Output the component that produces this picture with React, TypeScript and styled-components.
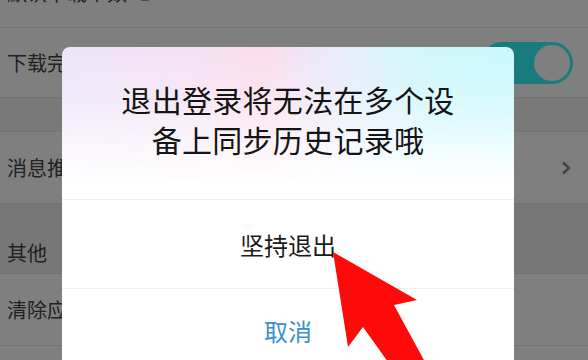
import React from "react";
import styled, { createGlobalStyle } from "styled-components";

const GlobalStyle = createGlobalStyle`
  html, body {
    margin: 0;
    padding: 0;
    width: 588px;
    height: 360px;
    overflow: hidden;
    font-family: "Noto Sans CJK SC", "Noto Sans", sans-serif;
  }
`;

const Screen = styled.div`
  position: relative;
  width: 588px;
  height: 360px;
  overflow: hidden;
  background: #f4f4f4;
`;

const Settings = styled.div`
  display: flex;
  flex-direction: column;
  margin-top: -42px;
`;

const Row = styled.div<{ $h?: number; $pr?: number }>`
  display: flex;
  align-items: center;
  justify-content: space-between;
  height: ${(p) => p.$h ?? 70}px;
  padding: 0 ${(p) => p.$pr ?? 14}px 0 7px;
  background: #fefefe;
  border-bottom: 1px solid #e8e8e8;
  box-sizing: border-box;
  font-size: 20px;
  color: #444;
`;

const Gap = styled.div`
  height: 33px;
  background: #f3f3f3;
  border-bottom: 1px solid #e8e8e8;
`;

const Header = styled.div`
  display: flex;
  align-items: flex-end;
  height: 70px;
  padding: 0 0 6px 7px;
  box-sizing: border-box;
  background: #eeeeee;
  border-bottom: 1px solid #e0e0e0;
  font-size: 20px;
  color: #444;
`;

const Value = styled.span`
  margin-left: 12px;
  color: #999;
`;

const Label = styled.div`
  display: flex;
  align-items: center;
`;

const Toggle = styled.div`
  position: relative;
  width: 92px;
  height: 42px;
  margin-right: 1px;
  border-radius: 21px;
  background: #34f6ff;
`;

const Thumb = styled.div`
  position: absolute;
  right: 3px;
  top: 3px;
  width: 36px;
  height: 36px;
  border-radius: 50%;
  background: #ffffff;
`;

const Dim = styled.div`
  position: absolute;
  inset: 0;
  background: rgba(0, 0, 0, 0.5);
`;

const Dialog = styled.div`
  position: absolute;
  left: 62px;
  top: 47px;
  width: 452px;
  height: 340px;
  border-radius: 8px;
  overflow: hidden;
  display: flex;
  flex-direction: column;
  background: linear-gradient(to bottom, rgba(255, 255, 255, 0) 0px, rgba(255, 255, 255, 0.25) 55px, #ffffff 135px),
    linear-gradient(to right, #ece4f8 0%, #f4e1f3 28%, #fbdcec 45%, #e6ecfb 62%, #d0f6fc 78%, #c8f8fc 100%);
`;

const Title = styled.div`
  padding: 32px 10px 40px;
  text-align: center;
  font-size: 30px;
  line-height: 40px;
  letter-spacing: 0.3px;
  color: #141414;
  border-bottom: 1px solid #efefef;
`;

const Action = styled.div<{ $primary?: boolean }>`
  display: flex;
  align-items: center;
  justify-content: center;
  height: ${(p) => (p.$primary ? 83 : 88)}px;
  font-size: 24px;
  color: ${(p) => (p.$primary ? "#3d8fcd" : "#1a1a1a")};
  border-bottom: ${(p) => (p.$primary ? "none" : "1px solid #f0f0f0")};
`;

const Pointer = styled.svg`
  position: absolute;
  left: 0;
  top: 0;
  pointer-events: none;
`;

export default function App() {
  return (
    <Screen>
      <GlobalStyle />
      <Settings>
        <Row>
          <Label>
            默认下载个数<Value>1</Value>
          </Label>
        </Row>
        <Row>
          <Label>下载完成后自动删除</Label>
          <Toggle>
            <Thumb />
          </Toggle>
        </Row>
        <Gap />
        <Row $h={72} $pr={17}>
          <Label>消息推送设置</Label>
          <svg width="10" height="14" viewBox="0 0 10 14">
            <path d="M2 1.5 L8 7 L2 12.5" fill="none" stroke="#8a8a8a" strokeWidth="2.5" />
          </svg>
        </Row>
        <Header>其他</Header>
        <Row $h={72}>
          <Label>清除应用缓存</Label>
        </Row>
        <Row />
      </Settings>
      <Dim />
      <Dialog>
        <Title>
          退出登录将无法在多个设
          <br />
          备上同步历史记录哦
        </Title>
        <Action>坚持退出</Action>
        <Action $primary>取消</Action>
      </Dialog>
      <Pointer width="588" height="360" viewBox="0 0 588 360">
        <polygon
          points="333,252 417,300 394,305 425,362 388,362 363,327 348,347"
          fill="#ff0a0a"
        />
      </Pointer>
    </Screen>
  );
}
